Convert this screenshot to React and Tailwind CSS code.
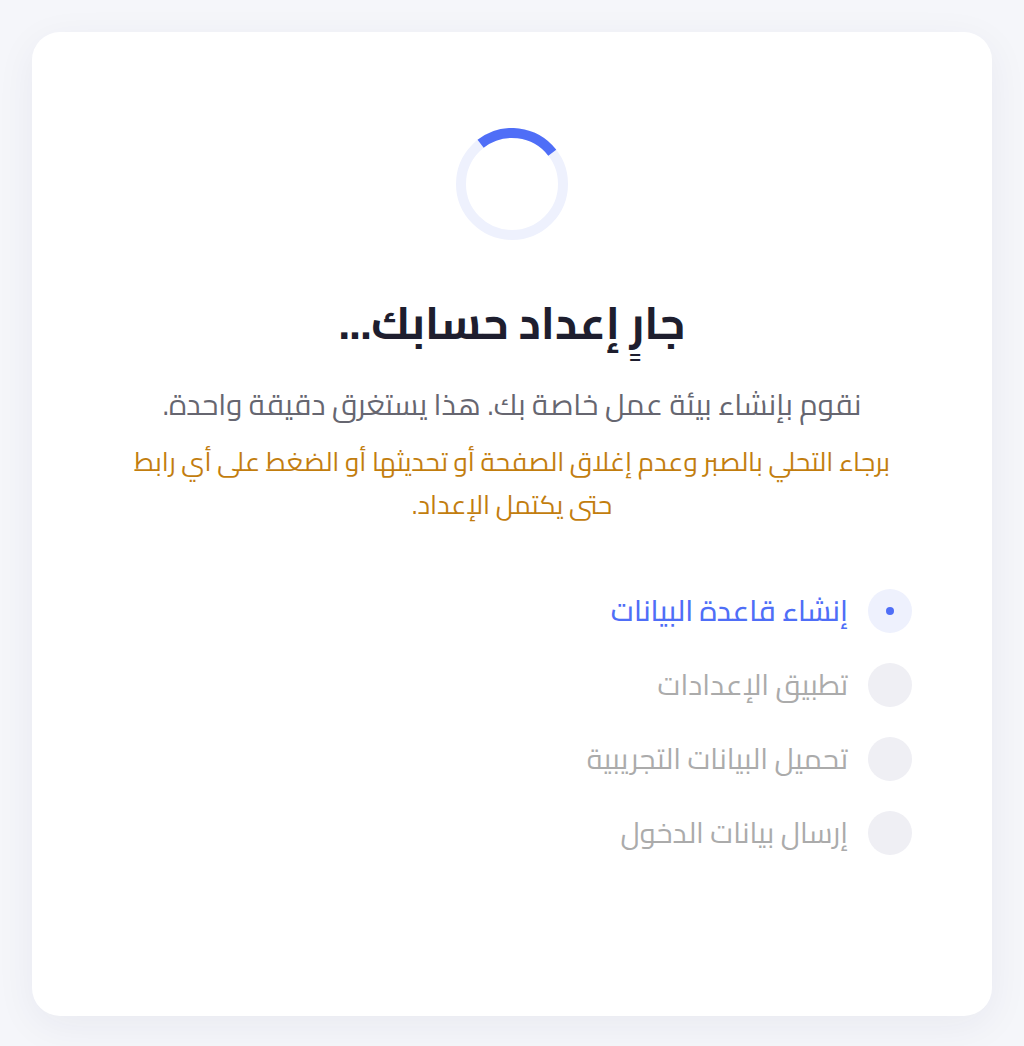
import React from "react";

const steps = [
  { label: "إنشاء قاعدة البيانات", active: true },
  { label: "تطبيق الإعدادات", active: false },
  { label: "تحميل البيانات التجريبية", active: false },
  { label: "إرسال بيانات الدخول", active: false },
];

export default function App() {
  return (
    <div
      dir="rtl"
      className="min-h-[1046px] w-full bg-[#f5f6fa] p-8"
      style={{ fontFamily: "Cairo, 'Noto Sans Arabic', 'DejaVu Sans', sans-serif" }}
    >
      <div className="h-[984px] rounded-[28px] bg-white shadow-[0_10px_40px_rgba(30,40,90,0.06)] flex flex-col items-center pt-[96px]">
        <svg width="112" height="112" viewBox="0 0 112 112">
          <circle cx="56" cy="56" r="51" fill="none" stroke="#eef1fd" strokeWidth="10" />
          <circle
            cx="56"
            cy="56"
            r="51"
            fill="none"
            stroke="#4f6ef7"
            strokeWidth="10"
            strokeDasharray={`${(2 * Math.PI * 51 * 90) / 360} ${2 * Math.PI * 51}`}
            transform="rotate(-128 56 56)"
          />
        </svg>
        <h1 className="mt-[52px] text-[45px] font-bold text-[#1e1e2e] leading-[62px]">جارٍ إعداد حسابك...</h1>
        <p className="mt-[28px] text-[29.5px] font-normal text-[#666670] leading-[45px]">
          نقوم بإنشاء بيئة عمل خاصة بك. هذا يستغرق دقيقة واحدة.
        </p>
        <p className="mt-[13px] max-w-[790px] text-center text-[26px] font-normal text-[#c27d0e] leading-[43px]">
          برجاء التحلي بالصبر وعدم إغلاق الصفحة أو تحديثها أو الضغط على أي رابط حتى يكتمل الإعداد.
        </p>
        <div className="mt-[63px] w-full px-20 flex flex-col gap-[30px]">
          {steps.map((s) => (
            <div key={s.label} className="flex items-center gap-5">
              <div
                className={
                  s.active
                    ? "w-11 h-11 rounded-full bg-[#eef1fd] flex items-center justify-center"
                    : "w-11 h-11 rounded-full bg-[#efeff4]"
                }
              >
                {s.active && <div className="w-2 h-2 rounded-full bg-[#4f6ef7]" />}
              </div>
              <span
                className={
                  s.active
                    ? "text-[29px] font-medium leading-[44px] text-[#4f6ef7]"
                    : "text-[29px] font-normal leading-[44px] text-[#ababab]"
                }
              >
                {s.label}
              </span>
            </div>
          ))}
        </div>
      </div>
    </div>
  );
}
